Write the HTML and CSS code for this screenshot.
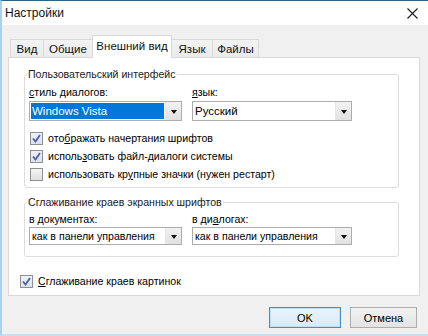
FILE: index.html
```html
<!DOCTYPE html>
<html lang="ru">
<head>
<meta charset="utf-8">
<title>Настройки</title>
<link rel="stylesheet" href="styles.css">
</head>
<body>
<div class="window">
  <div class="titlebar">
    <span class="title">Настройки</span>
    <svg class="close" width="11" height="11" viewBox="0 0 11 11"><path d="M0.5 0.5 L10.5 10.5 M10.5 0.5 L0.5 10.5" stroke="#1a1a1a" stroke-width="1.1" fill="none"/></svg>
  </div>
  <div class="client">
    <div class="tabs">
      <div class="tab t1">Вид</div>
      <div class="tab t2">Общие</div>
      <div class="tab t3 active">Внешний вид</div>
      <div class="tab t4">Язык</div>
      <div class="tab t5">Файлы</div>
    </div>
    <div class="panel">
      <fieldset class="group g1">
        <legend>Пользовательский интерфейс</legend>
        <div class="grid">
          <div class="field">
            <div class="lbl"><u>с</u>тиль диалогов:</div>
            <div class="combo">
              <div class="value sel">Windows Vista</div>
              <div class="arrow"><span class="tri"></span></div>
            </div>
          </div>
          <div class="field">
            <div class="lbl"><u>я</u>зык:</div>
            <div class="combo">
              <div class="value">Русский</div>
              <div class="arrow"><span class="tri"></span></div>
            </div>
          </div>
        </div>
        <div class="checks">
          <div class="check"><span class="box on"><svg width="9" height="9" viewBox="0 0 9 9"><path d="M1 4.5 L3.5 7.5 L8 1" stroke="#4b5fa6" stroke-width="1.8" fill="none"/></svg></span><span class="ctext">ото<u>б</u>ражать начертания шрифтов</span></div>
          <div class="check"><span class="box on"><svg width="9" height="9" viewBox="0 0 9 9"><path d="M1 4.5 L3.5 7.5 L8 1" stroke="#4b5fa6" stroke-width="1.8" fill="none"/></svg></span><span class="ctext">исполь<u>з</u>овать файл-диалоги системы</span></div>
          <div class="check"><span class="box"></span><span class="ctext">использовать кр<u>у</u>пные значки (нужен рестарт)</span></div>
        </div>
      </fieldset>
      <fieldset class="group g2">
        <legend>Сглаживание краев экранных шрифтов</legend>
        <div class="grid">
          <div class="field">
            <div class="lbl">в <u>д</u>окументах:</div>
            <div class="combo small">
              <div class="value">как в панели управления</div>
              <div class="arrow"><span class="tri"></span></div>
            </div>
          </div>
          <div class="field">
            <div class="lbl">в ди<u>а</u>логах:</div>
            <div class="combo small">
              <div class="value">как в панели управления</div>
              <div class="arrow"><span class="tri"></span></div>
            </div>
          </div>
        </div>
      </fieldset>
      <div class="check outer"><span class="box on"><svg width="9" height="9" viewBox="0 0 9 9"><path d="M1 4.5 L3.5 7.5 L8 1" stroke="#4b5fa6" stroke-width="1.8" fill="none"/></svg></span><span class="ctext"><u>С</u>глаживание краев картинок</span></div>
    </div>
    <div class="buttons">
      <div class="btn default">OK</div>
      <div class="btn cancel">Отмена</div>
    </div>
  </div>
</div>
</body>
</html>
```
FILE: styles.css
```css
* { box-sizing: border-box; }
html, body { margin: 0; padding: 0; }
body {
  width: 428px;
  height: 336px;
  overflow: hidden;
  background: #f0f0f0;
  font-family: "Liberation Sans", Arial, sans-serif;
  font-size: 10.6px;
  color: #000;
}
.window {
  width: 428px;
  height: 336px;
  border-top: 1px solid #2d6684;
  border-left: 2px solid #a9d1ef;
  border-bottom: 2px solid #c4e0f5;
  display: flex;
  flex-direction: column;
}
.titlebar {
  height: 24px;
  background: #fff;
  display: flex;
  align-items: center;
  justify-content: space-between;
  padding: 0 10px 0 3px;
  flex: none;
}
.title { font-family: "Liberation Sans", Arial, sans-serif; font-size: 12px; color: #111; }
.close { display: block; margin-top: 1px; }
.client {
  flex: 1;
  display: flex;
  flex-direction: column;
  padding: 10px 8px 0 6px;
}
.tabs {
  display: flex;
  align-items: flex-end;
  height: 22px;
  padding-left: 2px;
  position: relative;
  z-index: 1;
}
.tab {
  height: 18px;
  border: 1px solid #d9d9d9;
  border-bottom: none;
  background: linear-gradient(#f3f3f3, #ebebeb);
  display: flex;
  align-items: center;
  justify-content: center;
  font-family: "Liberation Sans", Arial, sans-serif;
  font-size: 11.5px;
  color: #111;
  margin-right: -1px;
}
.t1 { width: 34px; }
.t2 { width: 50px; }
.t3 { width: 80px; }
.t4 { width: 42px; }
.t5 { width: 47px; }
.tab.active {
  height: 23px;
  margin-bottom: -1px;
  background: #fff;
  padding-bottom: 2px;
}
.panel {
  height: 239px;
  background: #fff;
  border: 1px solid #d9d9d9;
  padding: 9px 20px 0 15px;
  display: flex;
  flex-direction: column;
}
.group {
  margin: 0;
  border: 1px solid #dcdcdc;
  border-radius: 3px;
  padding: 0 0 0 4px;
  min-width: 0;
}
.group legend {
  margin-left: -2px;
  padding: 0 1px;
  line-height: 14px;
  color: #1a1a1a;
}
.grid {
  display: grid;
  grid-template-columns: 153px 160px;
  column-gap: 10px;
}
.g1 .grid { padding-top: 4px; }
.g2 { margin-top: 7px; height: 62px; }
.g2 .grid { padding-top: 3px; }
.lbl { line-height: 14px; height: 15px; }
.combo {
  margin-top: 1px;
  height: 20px;
  border: 1px solid #acacac;
  display: flex;
  background: #fff;
}
.combo.small { height: 18px; margin-top: 0; }
.value {
  flex: 1;
  padding-left: 2px;
  display: flex;
  align-items: center;
  white-space: nowrap;
  overflow: hidden;
}
.value.sel {
  margin: 1px;
  background: #0078d7;
  color: #fff;
  padding-left: 1px;
  font-size: 11.5px;
}
.combo:not(.small) .value { font-size: 11.5px; }
.arrow {
  width: 16px;
  background: linear-gradient(#f2f2f2, #e1e1e1);
  display: flex;
  align-items: center;
  justify-content: center;
  border-left: 1px solid #e6e6e6;
}
.tri {
  width: 0; height: 0;
  border-left: 3.5px solid transparent;
  border-right: 3.5px solid transparent;
  border-top: 4px solid #111;
  margin-top: 1px;
}
.checks {
  padding: 10px 0 6px 1px;
  display: flex;
  flex-direction: column;
  gap: 4px;
}
.check {
  display: flex;
  align-items: center;
  height: 14px;
}
.box {
  width: 13px; height: 13px;
  border: 1px solid #8f8f8f;
  background: linear-gradient(#f4f4f4, #dedede);
  display: flex;
  align-items: center;
  justify-content: center;
  margin-right: 5px;
  flex: none;
}
.box.on { background: linear-gradient(#eef0fa, #dde0ef); }
.box svg { display: block; }
.ctext { white-space: nowrap; }
.check.outer { margin-top: 17px; margin-left: -4px; }
.check.outer .box { margin-right: 5px; }
.buttons {
  display: flex;
  justify-content: flex-end;
  gap: 9px;
  padding: 11px 3px 0 0;
}
.btn {
  height: 21px;
  display: flex;
  align-items: center;
  justify-content: center;
  border: 1px solid #adadad;
  background: linear-gradient(#f2f2f2, #e3e3e3);
  font-size: 11px;
}
.btn.default {
  width: 72px;
  border-color: #3c8fd0;
  background: linear-gradient(#eaf4fc, #d8eaf9);
  box-shadow: inset 0 0 0 1px #bfe0f9;
}
.btn.cancel { width: 67px; }
```
